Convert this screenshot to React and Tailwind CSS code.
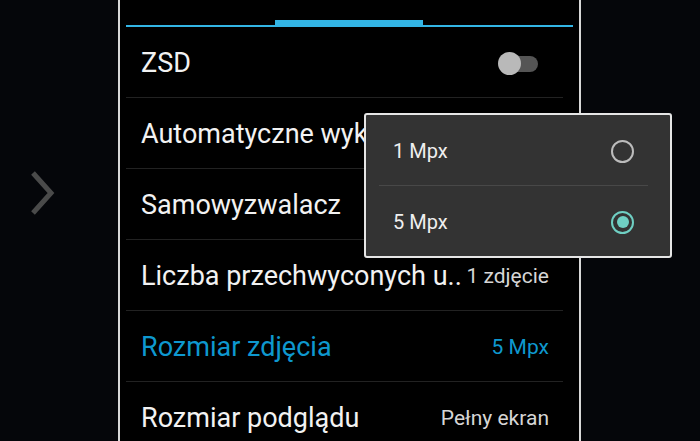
import { useState } from 'react';

const rows = [
  { title: 'ZSD', toggle: true },
  { title: 'Automatyczne wykrywanie sceny', value: 'Wył.' },
  { title: 'Samowyzwalacz', value: 'Wył.' },
  { title: 'Liczba przechwyconych u..', value: '1 zdjęcie' },
  { title: 'Rozmiar zdjęcia', value: '5 Mpx', active: true },
  { title: 'Rozmiar podglądu', value: 'Pełny ekran' },
];

const Radio = ({ checked }) =>
  checked ? (
    <span className="flex h-[23px] w-[23px] items-center justify-center rounded-full border-[2.5px] border-[#6fcfc3]">
      <span className="h-[12px] w-[12px] rounded-full bg-[#6fcfc3]" />
    </span>
  ) : (
    <span className="h-[23px] w-[23px] rounded-full border-2 border-[#bcbcbc]" />
  );

export default function App() {
  const [size, setSize] = useState('5 Mpx');

  return (
    <div
      className="relative flex h-[441px] w-[700px] overflow-hidden bg-[#05060a]"
      style={{ fontFamily: 'Roboto, "Noto Sans", sans-serif' }}
    >
      {/* side arrow */}
      <div className="flex w-[118px] shrink-0 items-start pl-[29px] pt-[170px]">
        <svg width="26" height="46" viewBox="0 0 26 46">
          <path d="M4 3 L22 23 L4 43" fill="none" stroke="#4a4a4a" strokeWidth="5" />
        </svg>
      </div>

      {/* phone screen */}
      <div className="w-[463px] shrink-0 border-x-2 border-[#d8d8d8] bg-black px-[6px]">
        <div className="relative h-[27px]">
          <div className="absolute bottom-0 left-0 right-0 h-[2px] bg-[#33b5e5]" />
          <div className="absolute bottom-0 left-[149px] h-[7px] w-[148px] bg-[#33b5e5]" />
        </div>

        <div className="w-[437px]">
          {rows.map((r) => (
            <div
              key={r.title}
              className="flex h-[71px] items-center justify-between gap-1 border-b border-[#222] pl-[15px] pr-[14px] pt-[3px]"
            >
              <span
                className={`truncate text-[27px] leading-normal ${
                  r.active ? 'text-[#0e98cf]' : 'text-[#f2f2f2]'
                }`}
              >
                {r.title}
              </span>
              {r.toggle ? (
                <span className="relative mr-[11px] flex h-[17px] w-[40px] items-center">
                  <span className="absolute right-0 h-[16px] w-[30px] rounded-full bg-[#555]" />
                  <span className="absolute left-0 h-[23px] w-[23px] rounded-full bg-[#b9b9b9]" />
                </span>
              ) : (
                <span
                  className={`shrink-0 text-[21px] leading-normal ${
                    r.active ? 'text-[#0e98cf]' : 'text-[#d6d6d6]'
                  }`}
                >
                  {r.value}
                </span>
              )}
            </div>
          ))}
        </div>
      </div>

      {/* size dialog */}
      <div className="absolute left-[364px] top-[113px] w-[308px] rounded-[3px] border-2 border-[#e6e6e6] bg-[#333333]">
        {['1 Mpx', '5 Mpx'].map((opt, i) => (
          <div key={opt}>
            {i > 0 && <div className="ml-[13px] mr-[22px] h-px bg-[#484848]" />}
            <button
              onClick={() => setSize(opt)}
              className="flex h-[70px] w-full items-center justify-between pl-[27px] pr-[36px] pt-[2px] text-left"
            >
              <span className="text-[20px] text-[#efefef]">{opt}</span>
              <Radio checked={size === opt} />
            </button>
          </div>
        ))}
      </div>
    </div>
  );
}
